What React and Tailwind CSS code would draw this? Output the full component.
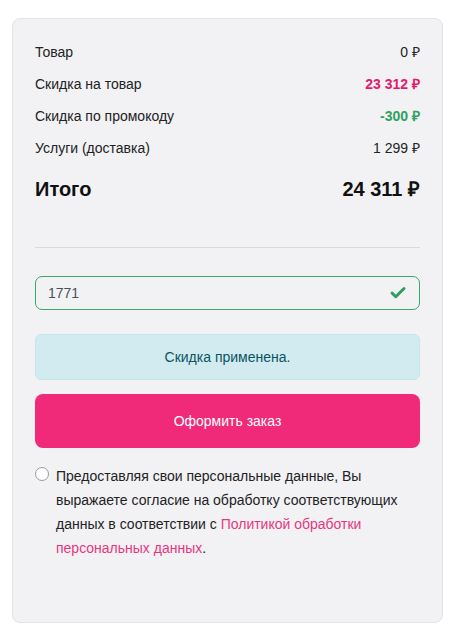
import { Check } from "lucide-react";

function Row({ label, value, valueClass = "text-[#222]" }) {
  return (
    <div className="flex justify-between items-center py-[6px] leading-5 text-[14px]">
      <span className="text-[#222]">{label}</span>
      <span className={valueClass}>{value}</span>
    </div>
  );
}

export default function App() {
  return (
    <div
      className="min-h-screen bg-white pl-[12px] pt-[18px]"
      style={{ fontFamily: '"Liberation Sans", Arial, sans-serif' }}
    >
      <div className="w-[431px] rounded-[8px] border border-[#e4e4e8] bg-[#f2f2f5] px-[22px] pt-[17px] pb-[62px]">
        <Row label="Товар" value="0 ₽" />
        <Row label="Скидка на товар" value="23 312 ₽" valueClass="font-bold text-[#e5196b]" />
        <Row label="Скидка по промокоду" value="-300 ₽" valueClass="font-bold text-[#2ea160]" />
        <Row label="Услуги (доставка)" value="1 299 ₽" />

        <div className="mt-[11px] flex justify-between items-center leading-7 text-[20px] font-bold text-[#111]">
          <span>Итого</span>
          <span>24 311 ₽</span>
        </div>

        <div className="mt-[44px] h-px bg-[#dadade]" />

        <div className="mt-[28px] flex items-center h-[34px] rounded-[7px] border border-[#3aa76d] px-[12px]">
          <input
            className="flex-1 bg-transparent outline-none text-[14px] text-[#495057]"
            defaultValue="1771"
          />
          <Check className="w-[18px] h-[18px] text-[#2f9e61]" strokeWidth={4} />
        </div>

        <div className="mt-[24px] h-[46px] flex items-center justify-center rounded-[6px] border border-[#c4e6ec] bg-[#d1ebf0] text-[14px] text-[#0c5460]">
          Скидка применена.
        </div>

        <button className="mt-[14px] w-full h-[54px] rounded-[8px] bg-[#f02a78] text-white text-[14px]">
          Оформить заказ
        </button>

        <div className="mt-[18px] flex items-start gap-[7px]">
          <span className="mt-[1px] w-[14px] h-[14px] shrink-0 rounded-full border border-[#9a9a9a] bg-white" />
          <p className="text-[14px] leading-6 text-[#222] -mt-[2px]">
            Предоставляя свои персональные данные, Вы выражаете согласие на обработку соответствующих данных в соответствии с{" "}
            <a className="text-[#e8367e]">Политикой обработки персональных данных</a>.
          </p>
        </div>
      </div>
    </div>
  );
}
